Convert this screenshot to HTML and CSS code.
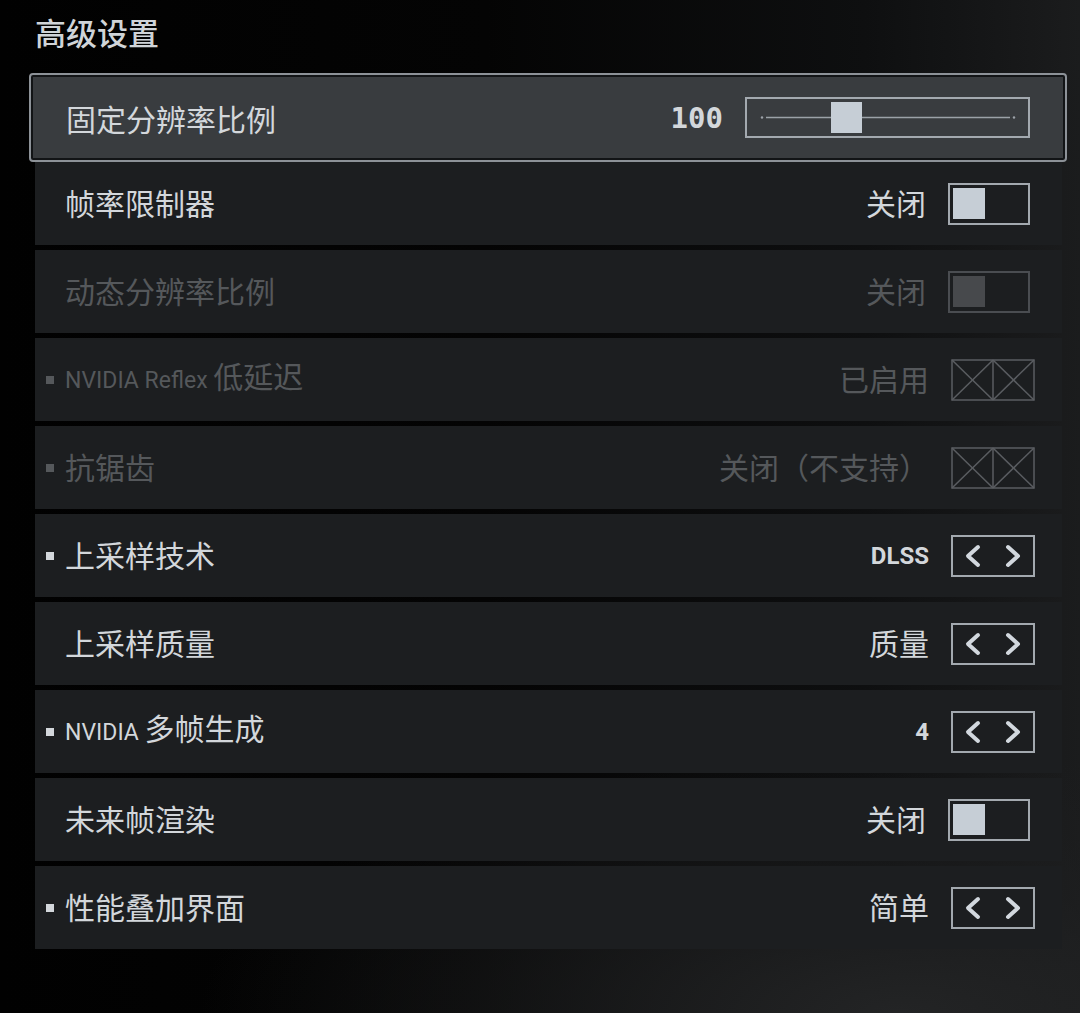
FILE: index.html
```html
<!DOCTYPE html>
<html lang="zh-CN">
<head>
<meta charset="utf-8">
<title>高级设置</title>
<link rel="stylesheet" href="styles.css">
</head>
<body>
<div class="page">
  <h1 class="title">高级设置</h1>
  <div class="list">
    <div class="row focus">
      <div class="focus-inner">
        <span class="slot"></span>
        <span class="label">固定分辨率比例</span>
        <span class="value mono">100</span>
        <svg class="slider" width="285" height="41" viewBox="0 0 285 41">
          <rect x="1" y="1" width="283" height="39" fill="none" stroke="#a3a9af" stroke-width="2"/>
          <line x1="21" y1="20.5" x2="265" y2="20.5" stroke="#9ca2a8" stroke-width="1.5"/>
          <circle cx="17" cy="20.5" r="1.2" fill="#9ca2a8"/>
          <circle cx="269" cy="20.5" r="1.2" fill="#9ca2a8"/>
          <rect x="86" y="5" width="31" height="31" fill="#c6ced6"/>
        </svg>
      </div>
    </div>

    <div class="row">
      <span class="slot"></span>
      <span class="label">帧率限制器</span>
      <span class="value">关闭</span>
      <div class="toggle"><span class="thumb"></span></div>
    </div>

    <div class="row disabled">
      <span class="slot"></span>
      <span class="label">动态分辨率比例</span>
      <span class="value">关闭</span>
      <div class="toggle"><span class="thumb"></span></div>
    </div>

    <div class="row disabled">
      <span class="slot bullet"></span>
      <span class="label"><span class="latin">NVIDIA Reflex </span>低延迟</span>
      <span class="value">已启用</span>
      <svg class="xbox" width="84" height="42" viewBox="0 0 84 42">
        <g fill="none" stroke="#5a5d61" stroke-width="1.5">
          <rect x="1" y="1" width="82" height="40"/>
          <line x1="42" y1="1" x2="42" y2="41"/>
          <line x1="1" y1="1" x2="42" y2="41"/>
          <line x1="42" y1="1" x2="1" y2="41"/>
          <line x1="42" y1="1" x2="83" y2="41"/>
          <line x1="83" y1="1" x2="42" y2="41"/>
        </g>
      </svg>
    </div>

    <div class="row disabled">
      <span class="slot bullet"></span>
      <span class="label">抗锯齿</span>
      <span class="value">关闭（不支持）</span>
      <svg class="xbox" width="84" height="42" viewBox="0 0 84 42">
        <g fill="none" stroke="#5a5d61" stroke-width="1.5">
          <rect x="1" y="1" width="82" height="40"/>
          <line x1="42" y1="1" x2="42" y2="41"/>
          <line x1="1" y1="1" x2="42" y2="41"/>
          <line x1="42" y1="1" x2="1" y2="41"/>
          <line x1="42" y1="1" x2="83" y2="41"/>
          <line x1="83" y1="1" x2="42" y2="41"/>
        </g>
      </svg>
    </div>

    <div class="row">
      <span class="slot bullet"></span>
      <span class="label">上采样技术</span>
      <span class="value latin-bold">DLSS</span>
      <svg class="arrows" width="84" height="42" viewBox="0 0 84 42">
        <rect x="1" y="1" width="82" height="40" fill="none" stroke="#a3a9af" stroke-width="2"/>
        <g fill="none" stroke="#d2d8de" stroke-width="4" stroke-linecap="round" stroke-linejoin="round">
          <polyline points="27,12 17,21 27,30"/>
          <polyline points="57,12 67,21 57,30"/>
        </g>
      </svg>
    </div>

    <div class="row">
      <span class="slot"></span>
      <span class="label">上采样质量</span>
      <span class="value">质量</span>
      <svg class="arrows" width="84" height="42" viewBox="0 0 84 42">
        <rect x="1" y="1" width="82" height="40" fill="none" stroke="#a3a9af" stroke-width="2"/>
        <g fill="none" stroke="#d2d8de" stroke-width="4" stroke-linecap="round" stroke-linejoin="round">
          <polyline points="27,12 17,21 27,30"/>
          <polyline points="57,12 67,21 57,30"/>
        </g>
      </svg>
    </div>

    <div class="row">
      <span class="slot bullet"></span>
      <span class="label"><span class="latin">NVIDIA </span>多帧生成</span>
      <span class="value latin-bold">4</span>
      <svg class="arrows" width="84" height="42" viewBox="0 0 84 42">
        <rect x="1" y="1" width="82" height="40" fill="none" stroke="#a3a9af" stroke-width="2"/>
        <g fill="none" stroke="#d2d8de" stroke-width="4" stroke-linecap="round" stroke-linejoin="round">
          <polyline points="27,12 17,21 27,30"/>
          <polyline points="57,12 67,21 57,30"/>
        </g>
      </svg>
    </div>

    <div class="row">
      <span class="slot"></span>
      <span class="label">未来帧渲染</span>
      <span class="value">关闭</span>
      <div class="toggle"><span class="thumb"></span></div>
    </div>

    <div class="row">
      <span class="slot bullet"></span>
      <span class="label">性能叠加界面</span>
      <span class="value">简单</span>
      <svg class="arrows" width="84" height="42" viewBox="0 0 84 42">
        <rect x="1" y="1" width="82" height="40" fill="none" stroke="#a3a9af" stroke-width="2"/>
        <g fill="none" stroke="#d2d8de" stroke-width="4" stroke-linecap="round" stroke-linejoin="round">
          <polyline points="27,12 17,21 27,30"/>
          <polyline points="57,12 67,21 57,30"/>
        </g>
      </svg>
    </div>
  </div>
</div>
</body>
</html>
```

FILE: styles.css
```css
html, body {
  margin: 0;
  padding: 0;
}
body {
  width: 1080px;
  height: 1013px;
  overflow: hidden;
  background:
    radial-gradient(ellipse 700px 260px at 900px 1013px, #232425 0%, rgba(30,31,32,0.6) 50%, rgba(0,0,0,0) 100%),
    linear-gradient(90deg, #010101 0%, #040404 45%, #0e0f10 80%, #1b1c1d 100%);
  font-family: "Noto Sans CJK SC", "Noto Sans", sans-serif;
  color: #d3d7db;
}
.page {
  padding: 12px 18px 0 35px;
}
.title {
  margin: 0;
  font-size: 31px;
  font-weight: 500;
  line-height: 40px;
  height: 40px;
  color: #d0d4d8;
}
.list {
  margin-top: 22px;
  width: 1027px;
  display: flex;
  flex-direction: column;
  gap: 5px;
}
.row {
  height: 83px;
  box-sizing: border-box;
  background: #1c1e20;
  display: flex;
  align-items: center;
  padding: 0 27px 0 11px;
  font-size: 30px;
}
.row.focus {
  height: 89px;
  margin: -1px -5px -5px -6px;
  padding: 2px;
  border: 2px solid #8d9298;
  border-radius: 4px;
  background: #121416;
}
.focus-inner {
  flex: 1;
  height: 100%;
  background: #393c3f;
  display: flex;
  align-items: center;
  padding: 0 33px 0 14px;
}
.slot {
  width: 19px;
  flex: none;
  display: flex;
  align-items: center;
}
.slot.bullet::before {
  content: "";
  width: 8px;
  height: 8px;
  background: currentColor;
}
.label {
  flex: 1;
  white-space: nowrap;
  line-height: 40px;
  margin-bottom: 4px;
}
.latin {
  font-family: Roboto, "Noto Sans", sans-serif;
  font-size: 23px;
  font-weight: 400;
}
.value {
  margin-right: 22px;
  white-space: nowrap;
  line-height: 40px;
  margin-bottom: 4px;
}
.focus-inner .label,
.focus-inner .value,
.value.latin-bold {
  margin-bottom: 0;
}
.latin-bold {
  font-family: Roboto, "Noto Sans", sans-serif;
  font-weight: 700;
  font-size: 24px;
}
.mono {
  font-family: "DejaVu Sans Mono", "Liberation Mono", monospace;
  font-weight: 700;
  font-size: 29px;
}
.slider, .arrows, .xbox {
  display: block;
  flex: none;
}
.toggle {
  width: 82px;
  height: 42px;
  box-sizing: border-box;
  border: 2px solid #a3a9af;
  padding: 0 3px;
  display: flex;
  align-items: center;
  margin-right: 5px;
  flex: none;
}
.thumb {
  width: 32px;
  height: 31px;
  background: #c6ced6;
}
.row.disabled {
  color: #55585b;
}
.row.disabled .toggle {
  border-color: #4a4d51;
}
.row.disabled .thumb {
  background: #47494c;
}
```
